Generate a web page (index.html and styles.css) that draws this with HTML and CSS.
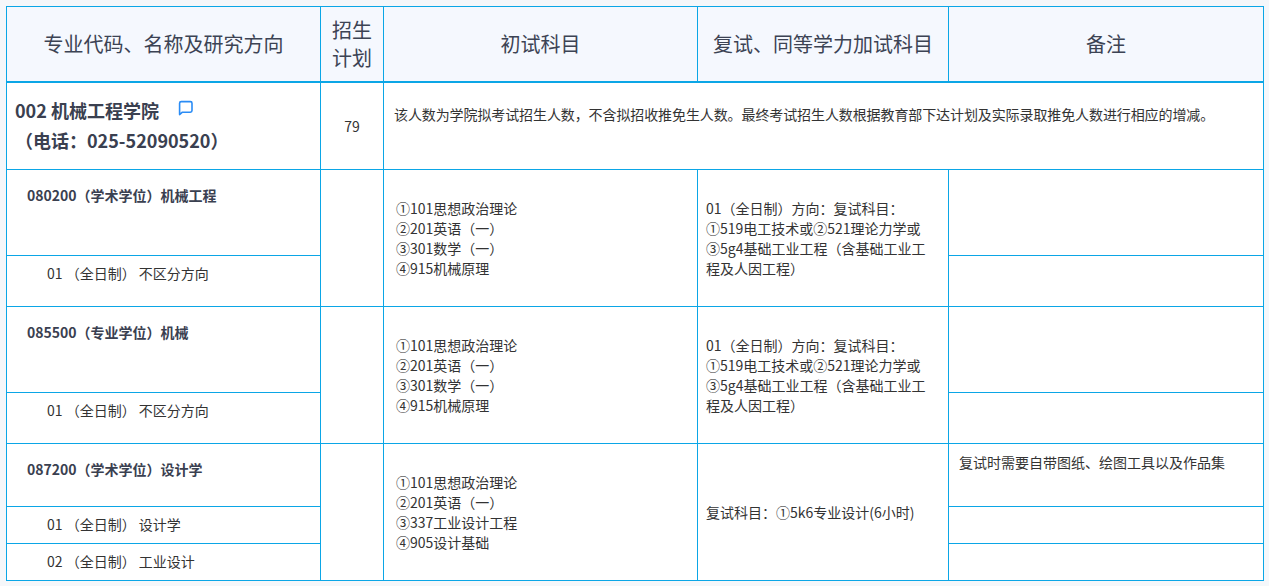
FILE: index.html
```html
<!DOCTYPE html>
<html lang="zh-CN">
<head>
<meta charset="utf-8">
<title>招生专业目录</title>
<link rel="stylesheet" href="styles.css">
</head>
<body>
<table class="plan">
  <colgroup>
    <col class="c1"><col class="c2"><col class="c3"><col class="c4"><col class="c5">
  </colgroup>
  <thead>
    <tr class="head">
      <th>专业代码、名称及研究方向</th>
      <th class="narrow">招生计划</th>
      <th>初试科目</th>
      <th>复试、同等学力加试科目</th>
      <th>备注</th>
    </tr>
  </thead>
  <tbody>
    <tr class="school">
      <td class="school-name">
        <div class="school-title">002 机械工程学院<svg class="chat" width="16" height="16" viewBox="0 0 16 16"><path d="M2.6 14.6V3.2A1.6 1.6 0 0 1 4.2 1.6h9.2a1.6 1.6 0 0 1 1.6 1.6v7.4a1.6 1.6 0 0 1-1.6 1.6H5.4z" fill="none" stroke="#2a8cf5" stroke-width="1.6" stroke-linejoin="round"/></svg></div>
        <div class="school-tel">（电话：025-52090520）</div>
      </td>
      <td class="num">79</td>
      <td colspan="3" class="school-note">该人数为学院拟考试招生人数，不含拟招收推免生人数。最终考试招生人数根据教育部下达计划及实际录取推免人数进行相应的增减。</td>
    </tr>

    <tr class="major">
      <td class="major-name">080200（学术学位）机械工程</td>
      <td rowspan="2"></td>
      <td rowspan="2" class="exam">①101思想政治理论<br>②201英语（一）<br>③301数学（一）<br>④915机械原理</td>
      <td rowspan="2" class="retest">01（全日制）方向：复试科目：<br>①519电工技术或②521理论力学或<br>③5g4基础工业工程（含基础工业工程及人因工程）</td>
      <td class="note"></td>
    </tr>
    <tr class="dir">
      <td class="dir-name">01 （全日制） 不区分方向</td>
      <td class="note"></td>
    </tr>

    <tr class="major">
      <td class="major-name">085500（专业学位）机械</td>
      <td rowspan="2"></td>
      <td rowspan="2" class="exam">①101思想政治理论<br>②201英语（一）<br>③301数学（一）<br>④915机械原理</td>
      <td rowspan="2" class="retest">01（全日制）方向：复试科目：<br>①519电工技术或②521理论力学或<br>③5g4基础工业工程（含基础工业工程及人因工程）</td>
      <td class="note"></td>
    </tr>
    <tr class="dir">
      <td class="dir-name">01 （全日制） 不区分方向</td>
      <td class="note"></td>
    </tr>

    <tr class="major short">
      <td class="major-name">087200（学术学位）设计学</td>
      <td rowspan="3"></td>
      <td rowspan="3" class="exam">①101思想政治理论<br>②201英语（一）<br>③337工业设计工程<br>④905设计基础</td>
      <td rowspan="3" class="retest">复试科目：①5k6专业设计(6小时)</td>
      <td class="note">复试时需要自带图纸、绘图工具以及作品集</td>
    </tr>
    <tr class="dir tight">
      <td class="dir-name">01 （全日制） 设计学</td>
      <td class="note"></td>
    </tr>
    <tr class="dir tight">
      <td class="dir-name">02 （全日制） 工业设计</td>
      <td class="note"></td>
    </tr>
  </tbody>
</table>
</body>
</html>
```
FILE: styles.css
```css
* { box-sizing: border-box; }
html, body { margin: 0; }
body {
  background: #f5f7fa;
  padding: 6px 0 0 6px;
  font-family: "Noto Sans CJK SC", "Microsoft YaHei", sans-serif;
  color: #333;
}
.plan {
  border-collapse: collapse;
  table-layout: fixed;
  width: 1257px;
  background: #fff;
  font-size: 14px;
  line-height: 20px;
}
.plan th, .plan td {
  border: 1px solid #0ba6e6;
  padding: 0;
}
.c1 { width: 314px; }
.c2 { width: 63px; }
.c3 { width: 314px; }
.c4 { width: 251px; }
.c5 { width: 315px; }

.plan .head th {
  background: #f5f8fe;
  font-weight: normal;
  font-size: 20px;
  line-height: 28px;
  color: #3c4354;
  height: 75px;
  text-align: center;
  vertical-align: middle;
  border-bottom-width: 2px;
}
.plan .head th.narrow { padding: 0 4px; }

.plan .school td { height: 88px; vertical-align: middle; }
.plan .school-name { padding: 0 0 2px 8px; font-weight: bold; color: #3a4050; }
.school-title { font-size: 18px; line-height: 30px; display: flex; align-items: center; }
.chat { margin-left: 18px; margin-top: -4px; }
.school-tel { font-size: 18px; line-height: 30px; }
.plan .num { text-align: center; }
.plan .school .school-note { vertical-align: top; padding: 21px 10px 0 10px; font-size: 14px; letter-spacing: -0.1px; }

.plan .major td { height: 86px; }
.plan .major.short td { height: 63px; }
.plan .dir td { height: 51px; }
.plan .dir.tight td { height: 37px; }

.plan .major-name { vertical-align: top; padding: 15px 0 0 20px; font-weight: bold; color: #3a4050; }
.plan .dir-name { vertical-align: top; padding: 7px 0 0 40px; }
.plan .exam { vertical-align: middle; padding: 0 12px; }
.plan .retest { vertical-align: middle; padding: 0 14px 0 8px; }
.plan .note { vertical-align: top; padding: 8px 10px 0 10px; }
```
